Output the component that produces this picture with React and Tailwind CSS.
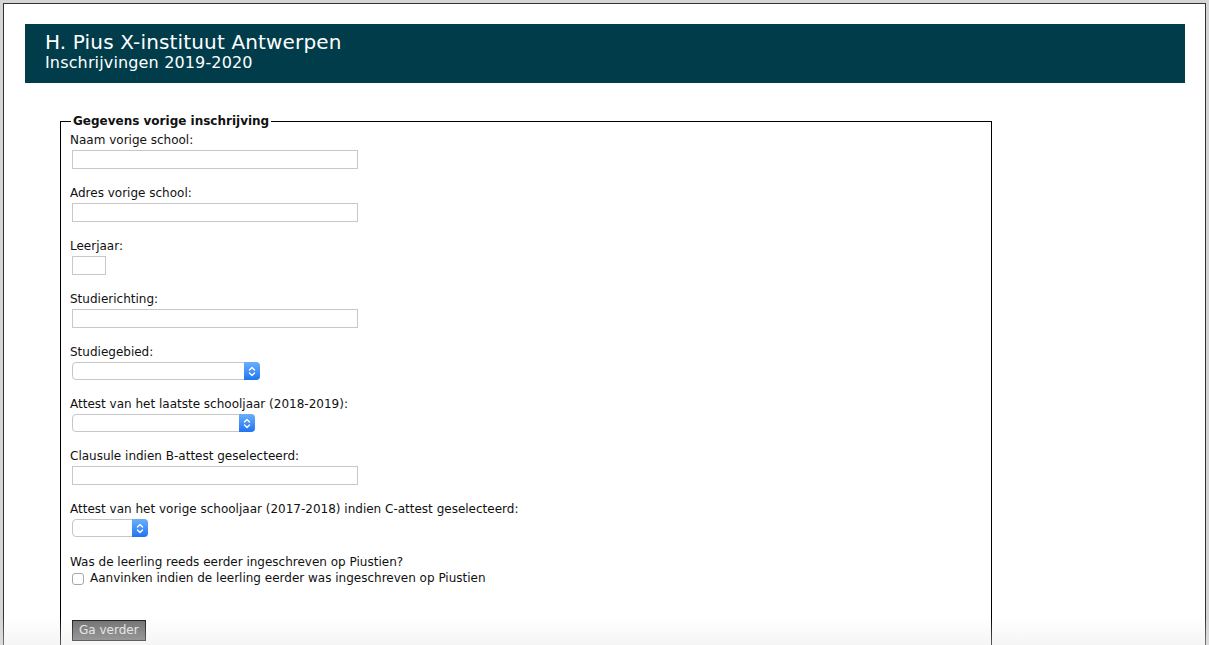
import React from 'react'

const font = { fontFamily: '"DejaVu Sans", Verdana, sans-serif' }

function Stepper() {
  return (
    <span className="pointer-events-none absolute right-0 top-0 bottom-0 w-[16px] rounded-r-[4px] bg-gradient-to-b from-[#6aaefc] to-[#1f74f2] flex items-center justify-center">
      <svg width="8" height="11" viewBox="0 0 8 11" fill="none" stroke="white" strokeWidth="1.4" strokeLinecap="round" strokeLinejoin="round">
        <path d="M1.5 4 L4 1.5 L6.5 4" />
        <path d="M1.5 7 L4 9.5 L6.5 7" />
      </svg>
    </span>
  )
}

function Field({ label, children, mb = 'mb-[17px]' }) {
  return (
    <div className={mb}>
      <div className="leading-[15px]">{label}</div>
      <div className="mt-[2px]">{children}</div>
    </div>
  )
}

function TextInput({ w = 'w-[286px]' }) {
  return <input type="text" className={`${w} h-[19px] ml-[2px] border border-[#c8c8c8] bg-white block outline-none`} />
}

function Sel({ w }) {
  return (
    <div className={`relative ${w} h-[18px] ml-[2px]`}>
      <select className="appearance-none w-full h-full border border-[#c6c6c6] rounded-[4px] bg-white block outline-none" />
      <Stepper />
    </div>
  )
}

export default function App() {
  return (
    <div className="h-[645px] overflow-hidden bg-[#d5d5d5] px-[3px] pt-[3px] text-[12px] text-[#111]" style={font}>
      <div className="relative h-[700px] bg-white border border-[#333] pt-[20px]">
        <div className="ml-[21px] w-[1160px] h-[59px] bg-[#013c4b] text-white pl-[20px] pt-[6px]">
          <div className="text-[20px] leading-[24px] tracking-[0.15px]">H. Pius X-instituut Antwerpen</div>
          <div className="text-[16px] leading-[18px] tracking-[0.15px]">Inschrijvingen 2019-2020</div>
        </div>

        <fieldset className="ml-[56px] mt-[31px] w-[932px] border border-black pl-[9px] pt-[4px] pb-[20px]">
          <legend className="ml-[1px] px-[2px] font-bold text-[12px] leading-[15px]">Gegevens vorige inschrijving</legend>

          <Field label="Naam vorige school:"><TextInput /></Field>
          <Field label="Adres vorige school:"><TextInput /></Field>
          <Field label="Leerjaar:"><TextInput w="w-[34px]" /></Field>
          <Field label="Studierichting:"><TextInput /></Field>
          <Field label="Studiegebied:"><Sel w="w-[188px]" /></Field>
          <Field label="Attest van het laatste schooljaar (2018-2019):"><Sel w="w-[183px]" /></Field>
          <Field label="Clausule indien B-attest geselecteerd:"><TextInput /></Field>
          <Field label="Attest van het vorige schooljaar (2017-2018) indien C-attest geselecteerd:" mb="mb-[18px]"><Sel w="w-[76px]" /></Field>

          <div className="leading-[15px]">Was de leerling reeds eerder ingeschreven op Piustien?</div>
          <label className="flex items-center leading-[15px] mt-[1px]">
            <span className="ml-[2px] w-[12px] h-[12px] rounded-[3px] border border-[#a8a8a8] bg-white" />
            <span className="ml-[6px]">Aanvinken indien de leerling eerder was ingeschreven op Piustien</span>
          </label>

          <button className="mt-[34px] ml-[2px] h-[21px] px-[6px] bg-[#707070] border border-[#1a1a1a] text-[#e6e6e6] text-[12px] leading-[19px]">Ga verder</button>
        </fieldset>
      </div>
      <div className="pointer-events-none fixed left-0 right-0 bottom-0 h-[28px] bg-gradient-to-b from-white/0 to-[#e6e6e6]/40" />
    </div>
  )
}
